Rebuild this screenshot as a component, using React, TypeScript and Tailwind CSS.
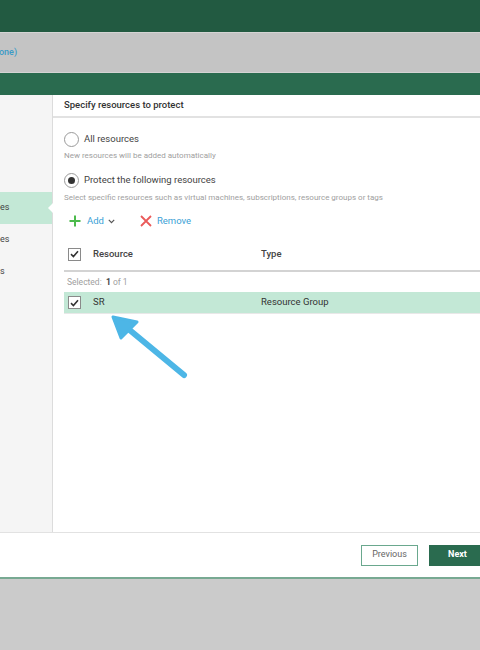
import React from "react";

function Check() {
  return (
    <span className="flex h-[13px] w-[13px] items-center justify-center border border-[#8a8a8a] bg-white">
      <svg width="9" height="8" viewBox="0 0 9 8" fill="none">
        <path d="M1 4.2 L3.4 6.5 L8 1.3" stroke="#333" strokeWidth="1.6" />
      </svg>
    </span>
  );
}

function Radio({ on }: { on?: boolean }) {
  return (
    <span className="flex h-[15px] w-[15px] items-center justify-center rounded-full border border-[#9a9a9a] bg-white">
      {on && <span className="h-[7px] w-[7px] rounded-full bg-[#333]" />}
    </span>
  );
}

export default function App() {
  const sideItems = ["", "", "", "es", "es", "s"];

  return (
    <div
      className="relative flex h-[650px] w-[480px] flex-col overflow-hidden bg-[#cbcbcb] text-[#444]"
      style={{ fontFamily: "Roboto, 'Liberation Sans', sans-serif" }}
    >
      <div className="h-[32px] bg-[#225a41]" />
      <div className="flex h-[41px] items-center border-y border-[#d4d4d4] bg-[#c4c4c4]">
        <span className="ml-[-1px] text-[9px] font-medium text-[#3b9bc7]">one)</span>
      </div>
      <div className="h-[22px] bg-[#2a6b4f]" />

      {/* dialog */}
      <div className="flex flex-col bg-white">
        <div className="flex h-[437px]">
          <aside className="w-[53px] border-r border-[#dcdcdc] bg-[#f5f5f5] pt-[1px]">
            {sideItems.map((t, i) => (
              <div
                key={i}
                className={`relative flex h-[32px] items-center text-[9px] text-[#444] ${
                  i === 3 ? "bg-[#c3e8d6]" : ""
                }`}
              >
                {t}
                {i === 3 && (
                  <span className="absolute right-[-1px] top-[11px] h-0 w-0 border-y-[5px] border-r-[5px] border-y-transparent border-r-white" />
                )}
              </div>
            ))}
          </aside>

          <section className="flex flex-1 flex-col">
            <div className="flex h-[23px] items-center border-b-2 border-[#e2e2e2] pl-[11px] text-[9.5px] font-medium text-[#333]">
              Specify resources to protect
            </div>

            <div className="pl-[11px]">
              <div className="mt-[13px] flex h-[16px] items-center gap-[5px]">
                <Radio />
                <span className="text-[9.5px]">All resources</span>
              </div>
              <div className="mt-[4px] flex h-[10px] items-center text-[8px] text-[#a0a0a0]">
                New resources will be added automatically
              </div>

              <div className="mt-[11px] flex h-[16px] items-center gap-[5px]">
                <Radio on />
                <span className="text-[9.5px]">Protect the following resources</span>
              </div>
              <div className="mt-[5px] flex h-[10px] items-center text-[8px] text-[#a0a0a0]">
                Select specific resources such as virtual machines, subscriptions, resource groups or tags
              </div>

              <div className="mt-[11px] flex h-[14px] items-center text-[9.5px] text-[#3b9fd6]">
                <svg width="12" height="12" viewBox="0 0 12 12" className="ml-[5px]">
                  <path d="M6 0.5 V11.5 M0.5 6 H11.5" stroke="#4cba4c" strokeWidth="2" />
                </svg>
                <span className="ml-[6px]">Add</span>
                <svg width="7" height="5" viewBox="0 0 7 5" className="ml-[4px] mt-[1px]">
                  <path d="M0.8 0.8 L3.5 3.6 L6.2 0.8" stroke="#555" strokeWidth="1.2" fill="none" />
                </svg>
                <svg width="12" height="12" viewBox="0 0 12 12" className="ml-[25px]">
                  <path d="M1 1 L11 11 M11 1 L1 11" stroke="#ea5a5a" strokeWidth="1.8" />
                </svg>
                <span className="ml-[5px]">Remove</span>
              </div>

              <div className="mt-[10px] flex h-[34px] items-center border-b-2 border-[#d3d3d3] text-[9.5px] font-medium">
                <span className="ml-[4px]">
                  <Check />
                </span>
                <span className="ml-[12px] w-[168px]">Resource</span>
                <span>Type</span>
              </div>

              <div className="flex h-[20px] items-center pl-[3px] text-[8.5px] text-[#a0a0a0]">
                Selected:&nbsp;&nbsp;<span className="font-bold text-[#444]">1</span>&nbsp;of 1
              </div>

              <div className="flex h-[22px] items-center border-b border-[#e8e8e8] bg-[#c3e8d6] text-[9.5px] text-[#333]">
                <span className="ml-[4px]">
                  <Check />
                </span>
                <span className="ml-[12px] w-[168px]">SR</span>
                <span>Resource Group</span>
              </div>
            </div>
          </section>
        </div>

        <div className="flex h-[45px] items-center justify-end gap-[11px] border-t border-[#e2e2e2]">
          <button className="h-[21px] w-[57px] border border-[#6aa88e] bg-white text-[9px] text-[#666]">
            Previous
          </button>
          <button className="mr-[-6px] h-[21px] w-[57px] bg-[#2a6b4f] text-[9px] font-bold text-white">
            Next
          </button>
        </div>
        <div className="h-[2px] bg-[#78a992]" />
      </div>

      {/* callout arrow */}
      <svg className="absolute left-0 top-0" width="480" height="650" viewBox="0 0 480 650">
        <path d="M184 375 L126 327" stroke="#4db6e6" strokeWidth="6" strokeLinecap="round" />
        <path d="M113 317 L137 322 L121 338 Z" fill="#4db6e6" stroke="#4db6e6" strokeWidth="3" strokeLinejoin="round" />
      </svg>
    </div>
  );
}
